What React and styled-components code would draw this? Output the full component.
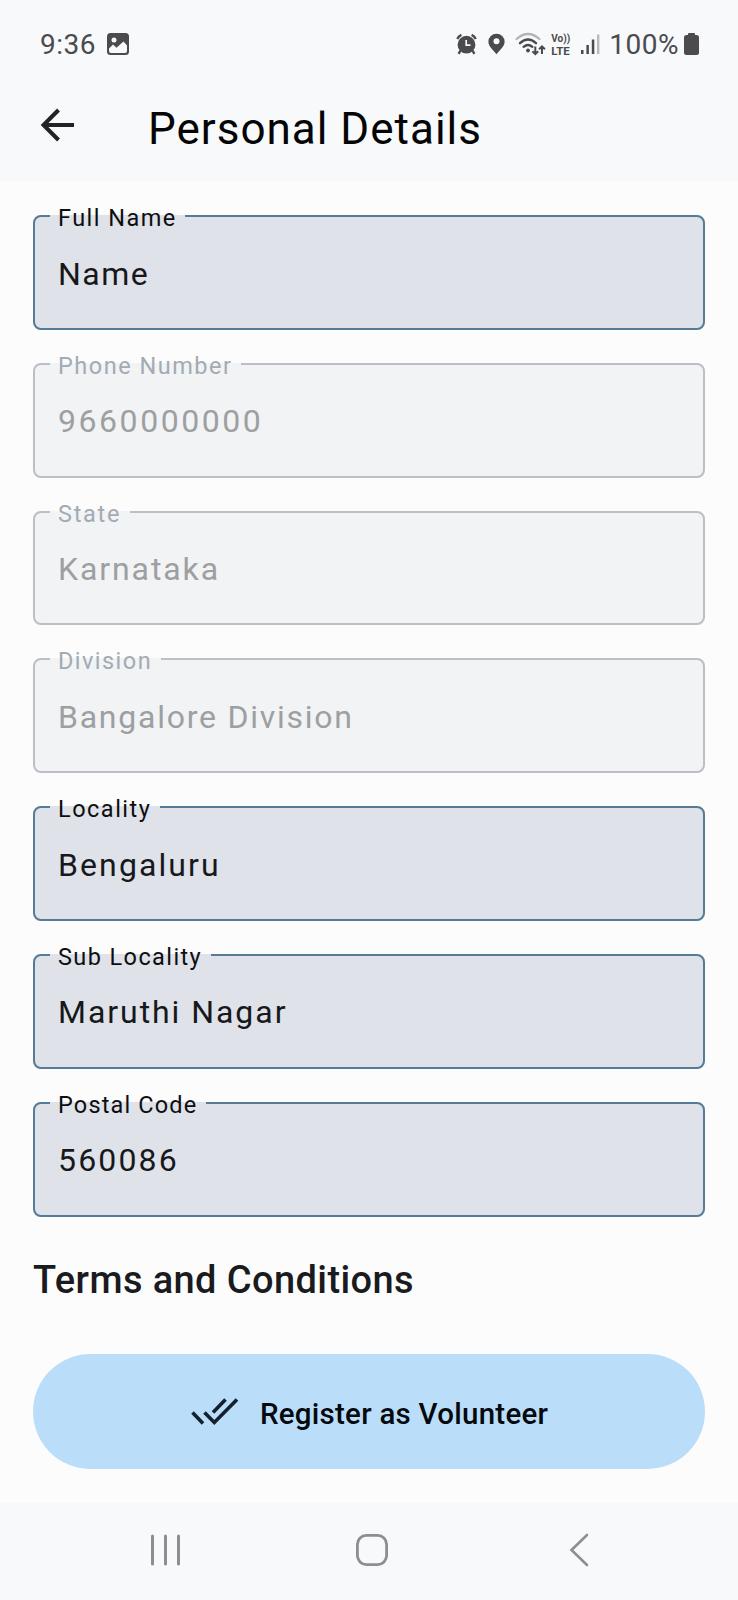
import React from "react";
import styled, { createGlobalStyle } from "styled-components";

const Global = createGlobalStyle`
  *, *::before, *::after { box-sizing: border-box; }
  body { margin: 0; background: #fcfcfc; font-family: Roboto, "Liberation Sans", sans-serif; }
  svg { display: block; flex: none; }
`;

const Screen = styled.div`
  width: 738px;
  height: 1600px;
  display: flex;
  flex-direction: column;
  background: #fcfcfc;
  overflow: hidden;
`;

const Top = styled.header`
  height: 181px;
  flex: none;
  background: #f8f9fb;
`;

const StatusBar = styled.div`
  height: 88px;
  padding: 0 39px 0 40px;
  display: flex;
  align-items: center;
  color: #4b4b4e;
`;

const StatusText = styled.span`
  padding-top: 1px;
  font-size: 28px;
  line-height: 32px;
  letter-spacing: 0.5px;
  margin-right: ${(p) => p.$gap}px;
`;

const StatusIcons = styled.div`
  display: flex;
  align-items: center;
  margin-left: auto;
`;

const IconSlot = styled.span`
  margin-right: ${(p) => p.$gap}px;
`;

const VoLte = styled.span`
  display: flex;
  flex-direction: column;
  width: 21px;
  margin-right: 8px;
  padding-top: 1px;
  font-weight: 700;
  font-size: 11.5px;
  line-height: 12px;
  white-space: nowrap;
`;

const VoLteLine = styled.span`
  display: block;
  height: 12px;
  font-size: ${(p) => p.$size}px;
`;

const TitleBar = styled.div`
  height: 75px;
  padding-left: 40px;
  display: flex;
  align-items: center;
`;

const Title = styled.h1`
  margin: 0 0 0 72px;
  padding-top: 7px;
  font-weight: 400;
  font-size: 44px;
  line-height: 60px;
  letter-spacing: 1px;
  color: #050506;
`;

const BackButton = styled.span`
  padding-bottom: 2px;
`;

const Content = styled.main`
  flex: 1;
  min-height: 0;
  padding: 20px 33px 0;
`;

const Form = styled.form`
  display: flex;
  flex-direction: column;
  gap: 19px;
`;

const Field = styled.fieldset`
  margin: 0;
  min-width: 0;
  height: 128.8px;
  padding: 0 15px;
  border: 2px solid ${(p) => (p.$disabled ? "#bcc0c6" : "#557b98")};
  border-radius: 8px;
  background: ${(p) => (p.$disabled ? "#f1f3f5" : "#dfe2e8")};
`;

const Legend = styled.legend`
  padding: 4px 8.5px 0 8px;
  font-size: 23.5px;
  line-height: 26px;
  letter-spacing: ${(p) => p.$spacing}px;
  color: ${(p) => (p.$disabled ? "#a2abb3" : "#0d0e10")};
`;

const Value = styled.div`
  padding: 22.5px 0 0 8px;
  font-size: 32px;
  line-height: 40px;
  letter-spacing: ${(p) => p.$spacing}px;
  color: ${(p) => (p.$disabled ? "#9d9fa1" : "#17181b")};
`;

const SectionTitle = styled.h2`
  margin: 38.5px 0 0;
  font-weight: 500;
  font-size: 38px;
  line-height: 50px;
  letter-spacing: 0.4px;
  color: #1a1b1e;
`;

const RegisterButton = styled.button`
  display: flex;
  align-items: center;
  width: 672px;
  height: 115px;
  margin-top: 49px;
  padding: 1px 0 0 158px;
  gap: 21px;
  border: 0;
  border-radius: 58px;
  background: #badefa;
  color: #06090d;
  font: 500 29.5px/36px Roboto, "Liberation Sans", sans-serif;
  letter-spacing: 0.25px;
`;

const ButtonLabel = styled.span`
  padding-top: 4px;
`;

const NavBar = styled.nav`
  height: 97px;
  flex: none;
  display: flex;
  align-items: center;
  padding: 0 0 3px 149px;
  background: #f8f9fb;
`;

const NavSlot = styled.span`
  margin-right: ${(p) => p.$gap}px;
`;

const fields = [
  { label: "Full Name", ls: 1.45, value: "Name", vs: 1.5 },
  { label: "Phone Number", ls: 1.5, value: "9660000000", vs: 2.55, disabled: true },
  { label: "State", ls: 1.7, value: "Karnataka", vs: 1.9, disabled: true },
  { label: "Division", ls: 1.45, value: "Bangalore Division", vs: 1.75, disabled: true },
  { label: "Locality", ls: 1.5, value: "Bengaluru", vs: 2.1 },
  { label: "Sub Locality", ls: 1.4, value: "Maruthi Nagar", vs: 1.95 },
  { label: "Postal Code", ls: 1.15, value: "560086", vs: 2.15 },
];

const PictureIcon = () => (
  <svg width="22" height="22" viewBox="0 0 22 22">
    <rect width="22" height="22" rx="3.5" fill="#4b4b4e" />
    <circle cx="7" cy="7" r="2.5" fill="#f8f9fb" />
    <path d="M2 15.5 6 11.5l3.5 3.3L16.5 8.5 20 12.5V18q0 2-2 2H4q-2 0-2-2z" fill="#f8f9fb" />
  </svg>
);

const AlarmIcon = () => (
  <svg width="21" height="22" viewBox="0 0 21 22" fill="none" stroke="#4b4b4e">
    <circle cx="10.5" cy="11.7" r="8.9" fill="#4b4b4e" stroke="none" />
    <path d="M1.3 6Q2.3 3.2 5.4 1.9M19.7 6Q18.7 3.2 15.6 1.9M4.5 17.5l-1.9 3.3M16.5 17.5l1.9 3.3" strokeWidth="2.4" />
    <path d="M10.2 7v5.2h4.3" stroke="#f8f9fb" strokeWidth="1.7" />
  </svg>
);

const PinIcon = () => (
  <svg width="17" height="22" viewBox="0 0 17 22">
    <path d="M8.5.8A8 8 0 0 0 .4 8.8c0 5 5 8.2 8.1 12.5 3.1-4.3 8.1-7.5 8.1-12.5A8 8 0 0 0 8.5.8z" fill="#4b4b4e" />
    <circle cx="8.5" cy="8.3" r="3" fill="#f8f9fb" />
  </svg>
);

const WifiIcon = () => (
  <svg width="31" height="24" viewBox="0 0 31 24" fill="none" stroke="#4b4b4e" strokeLinecap="round">
    <path d="M1.5 7Q13 -3 24.5 7" stroke="#b4b5b8" strokeWidth="2.2" />
    <path d="M5 11.2Q13 3.8 21 11.2M8.6 14.8Q13 11 17.4 14.8" strokeWidth="2.4" />
    <circle cx="13" cy="18.5" r="1.9" fill="#4b4b4e" stroke="none" />
    <path d="M20.3 14.5v7.5m-2.9-2.7 2.9 2.9 2.9-2.9M27 22V14.5m-2.9 2.7L27 14.3l2.900 2.900" strokeWidth="2" strokeLinecap="butt" />
  </svg>
);

const SignalIcon = () => (
  <svg width="20" height="22" viewBox="0 0 20 22">
    <path d="M1 17h2.5v4H1zM6.4 12h2.5v9H6.4zM11.8 6.5h2.5V21h-2.5z" fill="#4b4b4e" />
    <path d="M17 1.5h2.4V21H17z" fill="#b9babd" />
  </svg>
);

const BatteryIcon = () => (
  <svg width="15" height="22" viewBox="0 0 15 22" fill="#4b4b4e">
    <rect x="4" y="0" width="7" height="4" rx="1" />
    <rect x="0" y="2" width="15" height="20" rx="2.5" />
  </svg>
);

const BackArrow = () => (
  <svg width="36" height="34" viewBox="0 0 36 34" fill="none" stroke="#222326" strokeWidth="4">
    <path d="M34 17H4M18.5 2 3.5 17l15 15" />
  </svg>
);

const DoubleCheck = () => (
  <svg width="48" height="28" viewBox="0 0 48 28" fill="none" stroke="#14212c" strokeWidth="3.6">
    <path d="M1.5 14.5 12 25.5M13.5 14.5l9.8 10L46 1.5M22 14.5 34.5 1.5" />
  </svg>
);

const RecentsIcon = () => (
  <svg width="32" height="32" viewBox="0 0 32 32" stroke="#8d8e90" strokeWidth="3" strokeLinecap="round">
    <path d="M3.500 2v28M16.500 2v28M29.500 2v28" />
  </svg>
);

const HomeIcon = () => (
  <svg width="32" height="32" viewBox="0 0 32 32" fill="none" stroke="#8d8e90" strokeWidth="2.8">
    <rect x="1.4" y="1.4" width="29.2" height="29.2" rx="9" />
  </svg>
);

const NavBackIcon = () => (
  <svg width="20" height="34" viewBox="0 0 20 34" fill="none" stroke="#8d8e90" strokeWidth="2.6" strokeLinecap="round">
    <path d="M18 2 2.500 17 18 32" />
  </svg>
);

export default function App() {
  return (
    <Screen>
      <Global />
      <Top>
        <StatusBar>
          <StatusText $gap={11}>9:36</StatusText>
          <PictureIcon />
          <StatusIcons>
            <IconSlot $gap={11}><AlarmIcon /></IconSlot>
            <IconSlot $gap={10}><PinIcon /></IconSlot>
            <IconSlot $gap={5}><WifiIcon /></IconSlot>
            <VoLte>
              <VoLteLine $size={10}>Vo))</VoLteLine>
              <VoLteLine $size={11.5}>LTE</VoLteLine>
            </VoLte>
            <IconSlot $gap={9}><SignalIcon /></IconSlot>
            <StatusText $gap={5}>100%</StatusText>
            <BatteryIcon />
          </StatusIcons>
        </StatusBar>
        <TitleBar>
          <BackButton><BackArrow /></BackButton>
          <Title>Personal Details</Title>
        </TitleBar>
      </Top>
      <Content>
        <Form>
          {fields.map((f) => (
            <Field key={f.label} $disabled={f.disabled}>
              <Legend $disabled={f.disabled} $spacing={f.ls}>{f.label}</Legend>
              <Value $disabled={f.disabled} $spacing={f.vs}>{f.value}</Value>
            </Field>
          ))}
        </Form>
        <SectionTitle>Terms and Conditions</SectionTitle>
        <RegisterButton type="button">
          <DoubleCheck />
          <ButtonLabel>Register as Volunteer</ButtonLabel>
        </RegisterButton>
      </Content>
      <NavBar>
        <NavSlot $gap={175}><RecentsIcon /></NavSlot>
        <NavSlot $gap={181}><HomeIcon /></NavSlot>
        <NavBackIcon />
      </NavBar>
    </Screen>
  );
}
